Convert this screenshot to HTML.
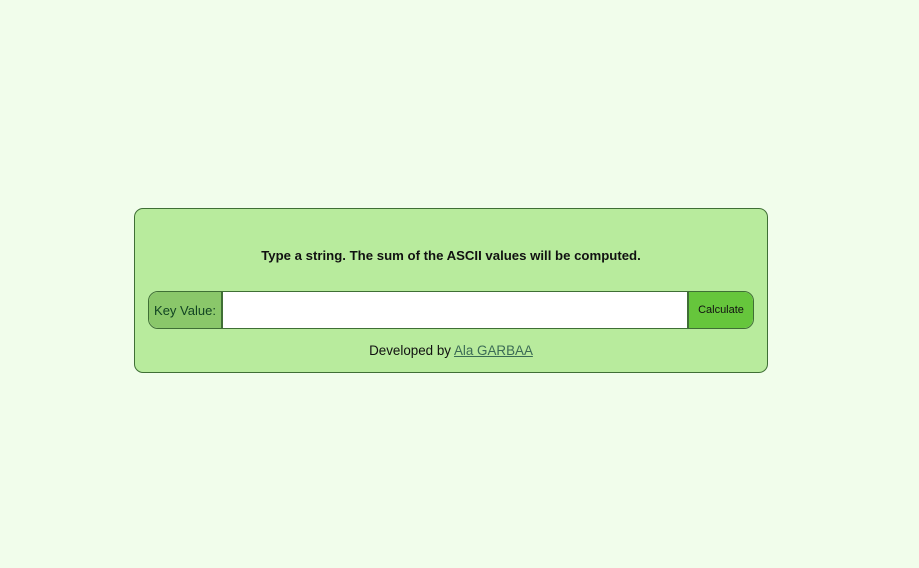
<!DOCTYPE html>
<html><head><meta charset="utf-8"><style>
html,body{margin:0;padding:0;width:919px;height:568px;background:#f1fdeb;font-family:"Liberation Sans",sans-serif;overflow:hidden}
.card{position:absolute;left:134px;top:208px;width:632px;height:163px;background:#b8eb9d;border:1px solid #3f6f35;border-radius:9px}
.t{position:absolute;left:0;right:0;top:39px;text-align:center;font-size:13.2px;font-weight:bold;color:#111}
.row{position:absolute;left:13px;top:82px;width:604px;height:36px;border:1px solid #3f6f35;border-radius:10px;overflow:hidden;display:flex;background:#fff}
.lab{width:72px;background:#8ac76a;border-right:2px solid #3f6f35;font-size:13px;color:#142;display:flex;align-items:center;justify-content:center}
.inp{flex:1;background:#fff}
.btn{width:64px;background:#66c63c;border-left:2px solid #3f6f35;font-size:11px;color:#111;display:flex;align-items:center;justify-content:center}
.f{position:absolute;left:0;right:0;top:134px;text-align:center;font-size:13.4px;color:#111}
.f a{color:#3b6b55;text-decoration:underline}
</style></head><body>
<div class="card">
<div class="t">Type a string. The sum of the ASCII values will be computed.</div>
<div class="row"><div class="lab">Key Value:</div><div class="inp"></div><div class="btn">Calculate</div></div>
<div class="f">Developed by <a>Ala GARBAA</a></div>
</div>
</body></html>
